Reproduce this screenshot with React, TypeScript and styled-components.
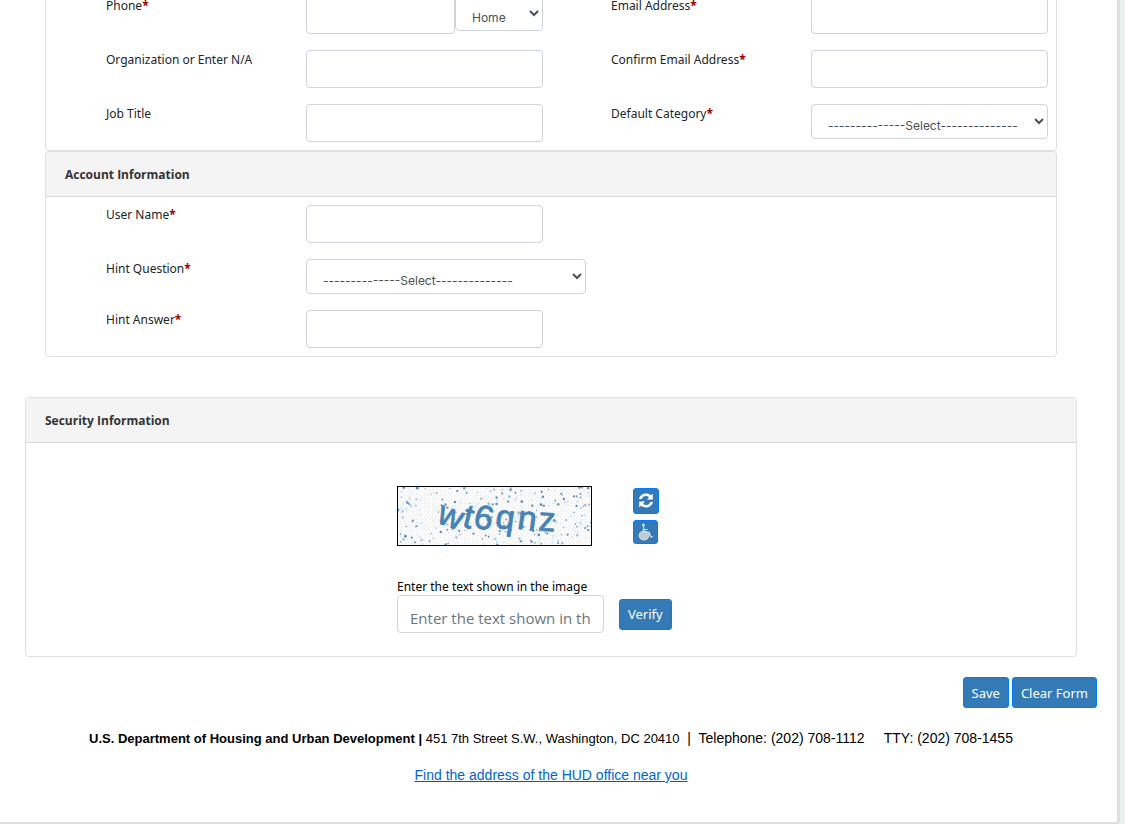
import React from "react";
import styled, { createGlobalStyle } from "styled-components";

const uiFont = `"Noto Sans", "Open Sans", sans-serif`;
const titleFont = `"Open Sans", "Noto Sans", sans-serif`;
const selectFont = `Inter, "Open Sans", sans-serif`;
const footFont = `"Liberation Sans", Arial, sans-serif`;

const GlobalStyle = createGlobalStyle`
  *, *::before, *::after { box-sizing: border-box; }
  body {
    margin: 0;
    background: #eceff0;
    color: #212529;
    font: 12px/20px ${uiFont};
  }
`;

const Sheet = styled.main`
  margin-right: 5px;
  padding: 0 40px 37px 25px;
  overflow: hidden;
  background: #fff;
  border: solid #dedede;
  border-width: 0 3px 2px 0;
  border-radius: 0 0 4px 0;
`;

const Inset = styled.div`
  margin: -13px 20px 40px;
`;

const Panel = styled.section`
  background: #fff;
  border: 1px solid #dfdfdf;
  border-radius: 4px;
`;

const PanelTitle = styled.h2`
  margin: 0;
  padding: 13px 19px 11px;
  background: #f4f4f4;
  border-bottom: 1px solid #d8d8d8;
  border-radius: 3px 3px 0 0;
  color: #333;
  font: 700 12px/20px ${titleFont};
`;

const Rows = styled.div`
  display: grid;
  gap: 16px;
  padding: 8px 0;
`;

const Row = styled.div`
  display: grid;
  grid-template-columns: 1fr 1fr;
`;

const Field = styled.div`
  display: grid;
  grid-template-columns: 200px 1fr;
  align-items: start;
  padding: 0 8px 0 60px;
`;

const Star = styled.span`
  color: #900;
  font-weight: 700;
`;

const Controls = styled.div`
  display: flex;
  align-items: flex-start;
`;

const TextInput = styled.input`
  display: block;
  width: 100%;
  min-width: 0;
  height: 38px;
  padding: 8px 12px 0;
  border: 1px solid #ced4da;
  border-radius: 4px;
  background: #fff;
  color: #495057;
  font: 15px/24px ${titleFont};
  &::placeholder { color: #6c757d; opacity: 1; }
`;

const Select = styled.select<{ $width?: string }>`
  flex: none;
  width: ${(p) => p.$width ?? "100%"};
  height: 35px;
  padding: 8px 12px 0;
  border: 1px solid #ced4da;
  border-radius: 4px;
  background: #fff;
  color: #495057;
  font: 12px/20px ${selectFont};
`;

const SecurityBody = styled.div`
  display: grid;
  grid-template-columns: 1fr 2fr;
  padding: 43px 0 23px;
`;

const SecurityContent = styled.div`
  grid-column: 2;
  padding-left: 21px;
`;

const CaptchaRow = styled.div`
  display: flex;
  gap: 41px;
  margin-bottom: 33px;
`;

const CaptchaImage = styled.svg`
  display: block;
  border: 1px solid #000;
`;

const IconStack = styled.div`
  display: grid;
  align-content: start;
  gap: 6px;
  padding-top: 2px;
`;

const Button = styled.button`
  height: 31px;
  padding: 0 8px;
  border: 1px solid #007bff;
  border-radius: 3px;
  background: #337ab7;
  color: #fff;
  font: 13px/20px ${uiFont};
`;

const IconButton = styled(Button)<{ $small?: boolean }>`
  display: grid;
  place-items: center;
  width: ${(p) => (p.$small ? 25 : 26)}px;
  height: ${(p) => (p.$small ? 24 : 26)}px;
  padding: 0;
  svg { display: block; }
`;

const CaptchaLabel = styled.label`
  display: block;
  color: #000;
  line-height: 16px;
`;

const VerifyRow = styled.div`
  display: flex;
  align-items: center;
  gap: 15px;
`;

const CaptchaField = styled.div`
  width: 207px;
`;

const Actions = styled.div`
  display: flex;
  justify-content: flex-end;
  gap: 3px;
  margin: 20px -20px 20px 0;
`;

const Footer = styled.footer`
  color: #000;
  font: 14px/20px ${footFont};
  text-align: center;
`;

const Address = styled.p`
  margin: 0 0 16px;
  white-space: pre-wrap;
`;

const Small = styled.span`
  font-size: 13px;
`;

const OfficeLink = styled.a`
  color: #0066cc;
  text-decoration: underline #3333ff;
`;

function FormField({ id, label, required, children }: {
  id: string; label: string; required?: boolean; children: React.ReactNode;
}) {
  return (
    <Field>
      <label htmlFor={id}>{label}{required && <Star>*</Star>}</label>
      <Controls>{children}</Controls>
    </Field>
  );
}

const glyphs = [
  { c: "w", x: 52, y: 40, r: 20 },
  { c: "t", x: 70, y: 41, r: 14 },
  { c: "6", x: 85, y: 42, r: 14 },
  { c: "q", x: 107, y: 42, r: 8 },
  { c: "n", x: 129, y: 43, r: 8 },
  { c: "z", x: 149, y: 44, r: 3 },
];

const speckles = (() => {
  let seed = 41;
  const next = () => (seed = (seed * 16807) % 2147483647) / 2147483647;
  return Array.from({ length: 380 }, (_, i) => ({
    x: next() * 193,
    y: next() * 58,
    r: 0.6 + next() * 0.8,
    fill: ["#5b8fbb", "#d3e9f7", "#9cc2de", "#dceefa", "#e2f1fa", "#7c9cb8"][i % 6],
  }));
})();

function Captcha() {
  return (
    <CaptchaImage width="195" height="60" viewBox="0 0 193 58" role="img" aria-label="Captcha">
      <defs>
        <pattern id="weave" width="4" height="4" patternUnits="userSpaceOnUse">
          <rect width="4" height="4" fill="#fcfcfc" />
          <rect width="1" height="1" fill="#e8e8e8" />
          <rect x="2" y="2" width="1" height="1" fill="#e8e8e8" />
        </pattern>
      </defs>
      <rect width="193" height="58" fill="url(#weave)" />
      {speckles.map((s, i) => <circle key={i} cx={s.x} cy={s.y} r={s.r} fill={s.fill} />)}
      <g fill="#4682b4" stroke="#4682b4" strokeWidth="0.8" fontFamily="Liberation Sans, Arial, sans-serif" fontSize="34" textAnchor="middle">
        {glyphs.map((g) => (
          <text key={g.c} x={g.x} y={g.y} transform={`rotate(${g.r} ${g.x} ${g.y - 8})`}>{g.c}</text>
        ))}
      </g>
    </CaptchaImage>
  );
}

function RefreshIcon() {
  return (
    <svg width="16" height="18" viewBox="0 0 16 18" aria-hidden="true">
      <path
        d="M1 7C2 3 5 1.500 8 1.500C10 1.500 11.500 2 12.800 3.200L14.800 1.800V7.500H9L11 5.200C10 4.300 9 4 8 4C6 4 4.500 5 3.500 7Z"
        fill="#fff"
      />
      <path
        d="M15 10C14 14 11 15.500 8 15.500C6 15.500 4.500 15 3.200 13.800L1.200 15.200V9.500H7L5 11.800C6 12.700 7 13 8 13C10 13 11.500 12 12.500 10Z"
        fill="#fff"
      />
    </svg>
  );
}

function WheelchairIcon() {
  return (
    <svg width="17" height="20" viewBox="0 0 17 20" aria-hidden="true">
      <ellipse cx="7" cy="13.500" rx="5" ry="4.500" fill="#c3cbd3" stroke="#d5e2ee" />
      <circle cx="6.500" cy="3" r="1.200" fill="#fff" />
      <path d="M6.500 4V10H12L14 15L16 14.500M7 7.500H10.500" fill="none" stroke="#d5e2ee" strokeWidth="1.200" />
    </svg>
  );
}

export default function App() {
  return (
    <>
      <GlobalStyle />
      <Sheet>
        <Inset>
          <Panel>
            <Rows>
              <Row>
                <FormField id="phone" label="Phone" required>
                  <TextInput id="phone" type="tel" />
                  <Select $width="88px" aria-label="Phone type"><option>Home</option></Select>
                </FormField>
                <FormField id="email" label="Email Address" required>
                  <TextInput id="email" type="email" />
                </FormField>
              </Row>
              <Row>
                <FormField id="org" label="Organization or Enter N/A"><TextInput id="org" /></FormField>
                <FormField id="email2" label="Confirm Email Address" required>
                  <TextInput id="email2" type="email" />
                </FormField>
              </Row>
              <Row>
                <FormField id="job" label="Job Title"><TextInput id="job" /></FormField>
                <FormField id="category" label="Default Category" required>
                  <Select id="category"><option>--------------Select--------------</option></Select>
                </FormField>
              </Row>
            </Rows>
          </Panel>
          <Panel>
            <PanelTitle>Account Information</PanelTitle>
            <Rows>
              <Row>
                <FormField id="user" label="User Name" required><TextInput id="user" /></FormField>
              </Row>
              <Row>
                <FormField id="question" label="Hint Question" required>
                  <Select id="question" $width="280px"><option>--------------Select--------------</option></Select>
                </FormField>
              </Row>
              <Row>
                <FormField id="answer" label="Hint Answer" required><TextInput id="answer" /></FormField>
              </Row>
            </Rows>
          </Panel>
        </Inset>

        <Panel>
          <PanelTitle>Security Information</PanelTitle>
          <SecurityBody>
            <SecurityContent>
              <CaptchaRow>
                <Captcha />
                <IconStack>
                  <IconButton type="button" aria-label="Refresh image"><RefreshIcon /></IconButton>
                  <IconButton $small type="button" aria-label="Accessible version"><WheelchairIcon /></IconButton>
                </IconStack>
              </CaptchaRow>
              <CaptchaLabel htmlFor="captcha">Enter the text shown in the image</CaptchaLabel>
              <VerifyRow>
                <CaptchaField>
                  <TextInput id="captcha" placeholder="Enter the text shown in the image" />
                </CaptchaField>
                <Button type="button">Verify</Button>
              </VerifyRow>
            </SecurityContent>
          </SecurityBody>
        </Panel>

        <Actions>
          <Button type="button">Save</Button>
          <Button type="button">Clear Form</Button>
        </Actions>

        <Footer>
          <Address>
            <Small><b>U.S. Department of Housing and Urban Development |</b> 451 7th Street S.W., Washington, DC 20410</Small>
            {"\u00a0 |\u00a0 Telephone: (202) 708-1112 \u00a0 \u00a0 TTY: (202) 708-1455"}
          </Address>
          <OfficeLink href="#">Find the address of the HUD office near you</OfficeLink>
        </Footer>
      </Sheet>
    </>
  );
}
